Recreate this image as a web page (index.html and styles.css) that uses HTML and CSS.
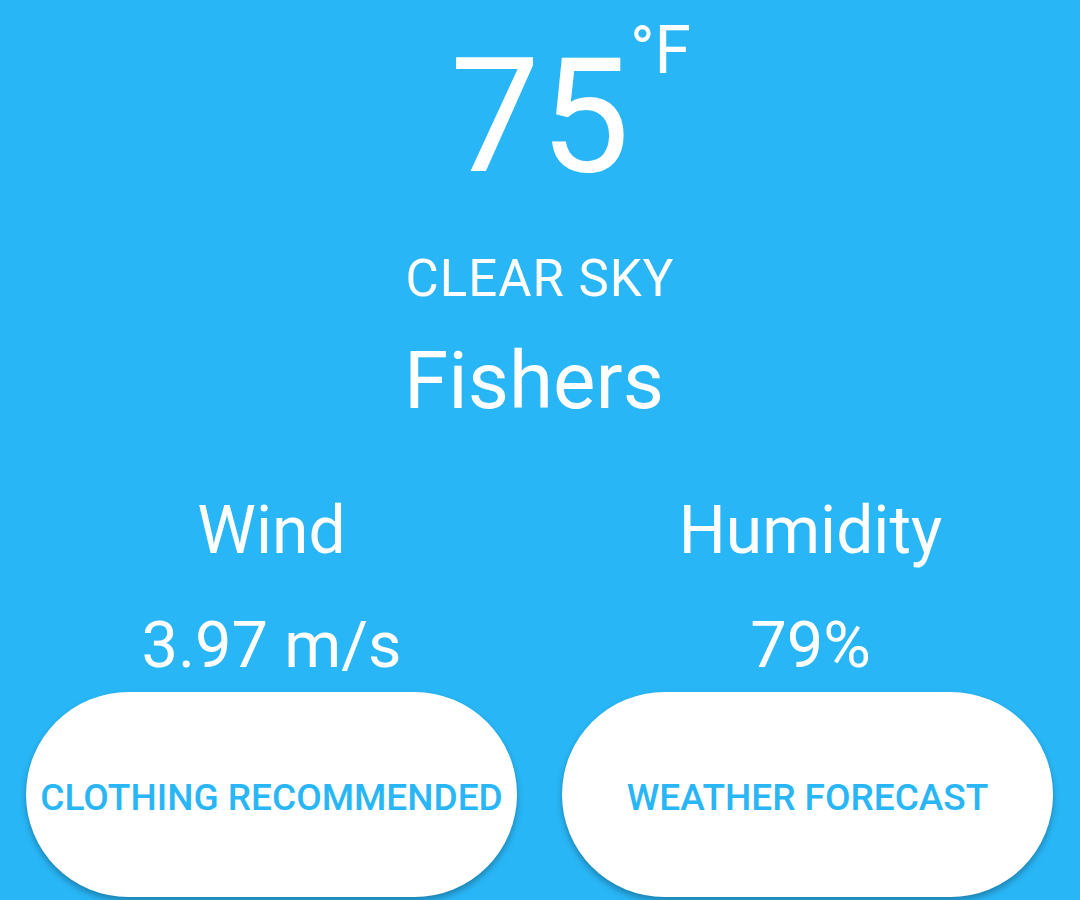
FILE: index.html
```html
<!DOCTYPE html>
<html lang="en">
<head>
<meta charset="utf-8">
<title>Weather</title>
<link rel="stylesheet" href="styles.css">
</head>
<body>
<main class="screen">
  <div class="temp"><span class="temp-num">75<span class="unit">°F</span></span></div>
  <div class="desc">CLEAR SKY</div>
  <div class="city">Fishers</div>
  <div class="stats">
    <section class="stat">
      <div class="stat-label">Wind</div>
      <div class="stat-value">3.97 m/s</div>
      <button class="pill">CLOTHING RECOMMENDED</button>
    </section>
    <section class="stat">
      <div class="stat-label">Humidity</div>
      <div class="stat-value">79%</div>
      <button class="pill">WEATHER FORECAST</button>
    </section>
  </div>
</main>
</body>
</html>
```

FILE: styles.css
```css
html, body {
  margin: 0;
  padding: 0;
  height: 900px;
  overflow: hidden;
}
body {
  background: #29b6f6;
  font-family: Roboto, "Liberation Sans", sans-serif;
  color: #ffffff;
}
.screen {
  display: flex;
  flex-direction: column;
  align-items: stretch;
  text-align: center;
}
.temp {
  margin-top: 37px;
  font-size: 160px;
  line-height: 1;
  height: 160px;
}
.temp-num {
  position: relative;
  display: inline-block;
}
.unit {
  position: absolute;
  left: 100%;
  top: -19px;
  font-size: 66px;
  line-height: 1;
}
.desc {
  margin-top: 56px;
  font-size: 51px;
  letter-spacing: 1px;
  line-height: 1;
}
.city {
  margin-top: 37px;
  padding-right: 12px;
  font-size: 80px;
  line-height: 1;
}
.stats {
  display: grid;
  grid-template-columns: 1fr 1fr;
  column-gap: 45px;
  padding: 0 27px 0 26px;
  margin-top: 77px;
}
.stat {
  display: flex;
  flex-direction: column;
  align-items: stretch;
}
.stat-label {
  font-size: 66px;
  line-height: 1;
}
.stat-value {
  margin-top: 49px;
  font-size: 65px;
  line-height: 1;
}
.stat:last-child .stat-label,
.stat:last-child .stat-value {
  padding-left: 6px;
}
.pill {
  margin-top: 14px;
  height: 205px;
  border: none;
  border-radius: 103px;
  background: #ffffff;
  color: #29b6f6;
  font-family: Roboto, "Liberation Sans", sans-serif;
  font-weight: 500;
  font-size: 37px;
  line-height: 1;
  padding: 6px 0 0 0;
  box-shadow: 0 4px 6px rgba(0, 0, 0, 0.28);
  white-space: nowrap;
}
```
